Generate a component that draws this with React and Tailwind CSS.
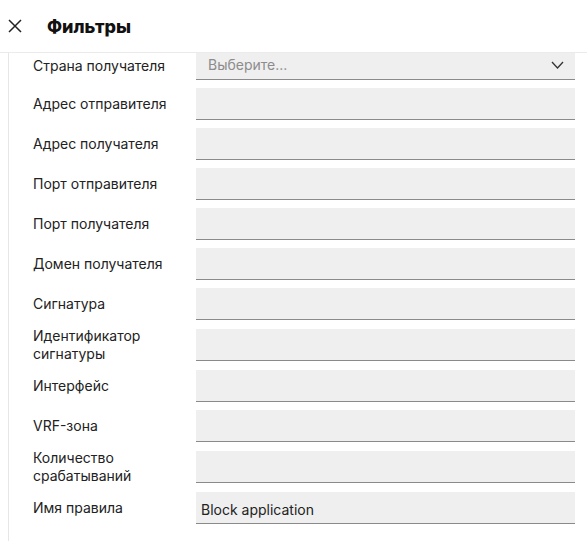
const FIELDS = [
  { label: "Адрес отправителя" },
  { label: "Адрес получателя" },
  { label: "Порт отправителя" },
  { label: "Порт получателя" },
  { label: "Домен получателя" },
  { label: "Сигнатура" },
  { label: "Идентификатор сигнатуры" },
  { label: "Интерфейс" },
  { label: "VRF-зона" },
  { label: "Количество срабатываний" },
  { label: "Имя правила", value: "Block application" },
];

function Row({ label, children }) {
  return (
    <div className="flex items-center min-h-[32px]">
      <div className="w-[163px] pr-4 text-[14px] leading-[18px] text-[#222] -my-[1px]">{label}</div>
      <div className="flex-1">{children}</div>
    </div>
  );
}

export default function App() {
  return (
    <div className="w-[587px] h-[541px] bg-white overflow-hidden" style={{ fontFamily: "Inter, 'Noto Sans', sans-serif" }}>
      {/* header */}
      <div className="h-[52px] flex items-center">
        <svg className="ml-[8px] mr-[25px]" width="14" height="14" viewBox="0 0 14 14" fill="none" stroke="#222" strokeWidth="1.5">
          <path d="M1 1L13 13M13 1L1 13" />
        </svg>
        <span className="text-[18px] font-extrabold text-[#111]">Фильтры</span>
      </div>

      <div className="border-t border-[#ebebeb] h-full">
        <div className="ml-[8px] border-l border-[#e6e6e6] h-full pl-[24px] pr-[12px]">
          <div className="flex flex-col gap-[8px]">
            <div className="flex items-center h-[27px]">
              <div className="w-[163px] pr-4 text-[14px] leading-[17px] text-[#222] -mt-[3px]">Страна получателя</div>
              <div className="flex-1 h-full bg-[#efefef] border-b border-[#8a8a8a] flex items-center justify-between pl-[12px] pr-[11px]">
                <span className="text-[14px] text-[#8c8c8c] -mt-[3px]">Выберите...</span>
                <svg className="-mt-[2px]" width="13" height="8" viewBox="0 0 13 8" fill="none" stroke="#333" strokeWidth="1.3">
                  <path d="M1 1L6.5 7L12 1" />
                </svg>
              </div>
            </div>
            {FIELDS.map((f) => (
              <Row key={f.label} label={f.label}>
                <div className="h-[32px] bg-[#efefef] border-b border-[#8a8a8a] flex items-end pl-[5px] pb-[3px]">
                  {f.value && <span className="text-[14px] text-[#222]">{f.value}</span>}
                </div>
              </Row>
            ))}
          </div>
        </div>
      </div>
    </div>
  );
}
